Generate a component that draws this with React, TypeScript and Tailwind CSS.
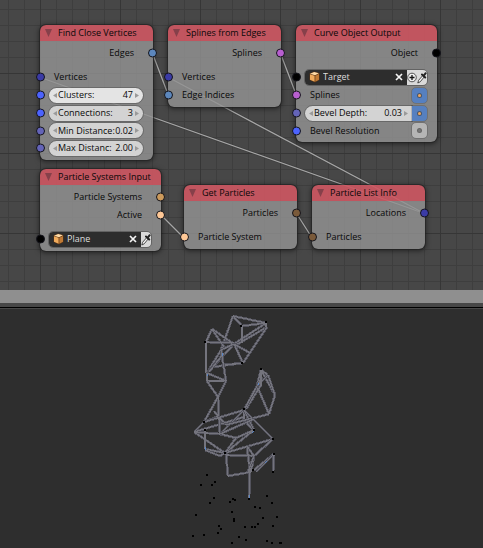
import { useId, type ReactNode } from "react";

const TONES = {
  edges: "bg-[#5c87bd]",
  vector: "bg-[#3b3ba6]",
  integer: "bg-[#4c63ff]",
  float: "bg-[#6464b8]",
  splines: "bg-[#b85fd0]",
  object: "bg-black",
  systems: "bg-[#cc9a5b]",
  system: "bg-[#ffc896]",
  particles: "bg-[#7a5a3a]",
};

type Tone = keyof typeof TONES;

function Socket({ tone, side }: { tone: Tone; side: "left" | "right" }) {
  const place = side === "left" ? "-left-1" : "-right-1";
  return (
    <span
      className={`absolute top-1/2 size-[9px] -translate-y-1/2 rounded-full border border-[#15151c] ${place} ${TONES[tone]}`}
    />
  );
}

function Node({ title, place, children }: { title: string; place: string; children: ReactNode }) {
  return (
    <section
      className={`absolute rounded-md shadow-[0_1px_5px_1px_rgba(0,0,0,0.5)] outline outline-[#222]/60 ${place}`}
    >
      <header className="flex h-4 items-center gap-[6px] rounded-t-md bg-[#ce5662]/90 pl-[5px]">
        <button type="button" aria-label={`Collapse ${title}`} className="flex">
          <svg width="7" height="8" viewBox="0 0 7 8">
            <path d="M0 0h7L3.500 8z" fill="#86404a" />
          </svg>
        </button>
        <h2 className="leading-[18px] whitespace-nowrap">{title}</h2>
      </header>
      <div className="rounded-b-md bg-[#929292]/82 pt-[3px] pb-[3px]">{children}</div>
    </section>
  );
}

function Output({ label, tone }: { label: string; tone: Tone }) {
  return (
    <div className="relative flex h-[18px] items-center justify-end pr-[19px] whitespace-nowrap">
      {label}
      <Socket tone={tone} side="right" />
    </div>
  );
}

function Input({
  tone,
  label,
  children,
  tight = false,
}: {
  tone: Tone;
  label?: string;
  children?: ReactNode;
  tight?: boolean;
}) {
  return (
    <div className={`relative flex items-center pr-[10px] pl-[9px] ${tight ? "h-[17px]" : "h-[18px]"}`}>
      <Socket tone={tone} side="left" />
      {label && <span className="flex-1 pl-[5px] whitespace-nowrap">{label}</span>}
      {children}
    </div>
  );
}

function NumberField({
  label,
  value,
  active = false,
  joined = false,
}: {
  label: string;
  value: string;
  active?: boolean;
  joined?: boolean;
}) {
  const id = useId();
  return (
    <div
      className={`relative flex h-[15px] min-w-0 flex-1 items-center pr-[10px] pl-[9px] outline outline-black/20 ${
        joined ? "rounded-l-lg" : "rounded-lg"
      } ${active ? "bg-[#e4e4e4]" : "bg-[#d3d3d3]"}`}
    >
      <svg className="absolute left-1" width="4" height="5" viewBox="0 0 4 5">
        <path d="M4 0v5L0 2.500z" fill="#9a9a9a" />
      </svg>
      <label htmlFor={id} className="whitespace-nowrap">
        {label}
      </label>
      <input
        id={id}
        defaultValue={value}
        className="w-0 min-w-0 flex-1 bg-transparent text-right outline-none"
      />
      <svg className="absolute right-1" width="4" height="5" viewBox="0 0 4 5">
        <path d="M0 0v5L4 2.500z" fill="#9a9a9a" />
      </svg>
    </div>
  );
}

function UseToggle({ label, on = false, joined = false }: { label: string; on?: boolean; joined?: boolean }) {
  return (
    <label
      className={`relative flex size-[15px] items-center justify-center outline outline-black/15 has-checked:bg-[#5680c0] ${
        joined ? "rounded-r-sm" : "rounded-sm"
      } bg-[#b5b5b5]`}
    >
      <input type="checkbox" aria-label={label} defaultChecked={on} className="peer absolute inset-0 appearance-none" />
      <span className="size-[3px] rounded-full bg-[#777] ring-1 ring-[#444]/70 peer-checked:bg-[#f0a860]" />
    </label>
  );
}

function Cube() {
  return (
    <svg width="11" height="12" viewBox="0 0 11 12" className="shrink-0">
      <path d="M.5 2.500 5 .5l5.500 1.500v7L6 11.500.5 9z" fill="#5b3414" />
      <path d="M1 2.700 5.100 1l4.800 1.300L6 4.200z" fill="#ffdca8" />
      <path d="M1 3.200 5.600 4.700v6.100L1 8.700z" fill="#f0ab5c" />
      <path d="M6.300 4.700 10 2.900v5.900l-3.700 2z" fill="#c07a35" />
    </svg>
  );
}

function Eyedropper() {
  return (
    <svg width="10" height="14" viewBox="0 0 10 14">
      <path d="M.8 13 1.600 10.300 5.800 5.500l1.500 1.300L3.200 11.800z" fill="#f4f4f4" stroke="#222" strokeWidth=".8" />
      <path d="m5 4.500 3.200 3M6.600 5.800 8.700 3.200" stroke="#222" strokeWidth="2" strokeLinecap="round" />
    </svg>
  );
}

function ObjectField({ label, value, create = false }: { label: string; value: string; create?: boolean }) {
  return (
    <div className="flex h-[15px] min-w-0 flex-1 overflow-hidden rounded-sm bg-[#d9d9d9] outline outline-black/25">
      <div className="flex min-w-0 flex-1 items-center gap-[3px] bg-[#2d2d2d] pr-1 pl-1">
        <Cube />
        <input
          aria-label={label}
          defaultValue={value}
          className="w-0 min-w-0 flex-1 bg-transparent text-[#dedede] outline-none"
        />
        <button type="button" aria-label={`Clear ${label}`}>
          <svg width="8" height="8" viewBox="0 0 8 8">
            <path d="m1 1 6 6M7 1 1 7" stroke="#f4f4f4" strokeWidth="1.700" />
          </svg>
        </button>
      </div>
      {create && (
        <button type="button" aria-label="Create object" className="flex items-center">
          <svg width="10" height="11" viewBox="0 0 10 11">
            <circle cx="5" cy="5.500" r="4.300" fill="#eee" stroke="#444" strokeWidth=".9" />
            <path d="M5 3v5M2.500 5.500h5" stroke="#111" strokeWidth="1.300" />
          </svg>
        </button>
      )}
      <button type="button" aria-label="Pick object" className="flex items-center">
        <Eyedropper />
      </button>
    </div>
  );
}

const LINKS = [
  "M152.500 53.500 168.500 95.500",
  "M280.500 53.500 296.500 95.500",
  "M40.500 77.500 424.500 213.500",
  "M168.500 77.500 424.500 213.500",
  "M160.500 214.500 184.500 238.500",
  "M296.500 213.500 312.500 238.500",
];

function Links() {
  return (
    <svg className="absolute top-0 left-0" width="483" height="290" fill="none">
      {LINKS.map((d) => (
        <g key={d}>
          <path d={d} stroke="#333" strokeOpacity=".5" strokeWidth="2.500" />
          <path d={d} stroke="#a6a6a6" strokeWidth="1.300" />
        </g>
      ))}
    </svg>
  );
}

const BEAMS = [
  // upper cluster
  "M233 316 242 326M233 316 266 323M242 326 266 323M242 326 242 343M233 316 220 353M234 344 266 323M236 345 267 327",
  "M266 323V329M212 329 206 342M212 329 234 344M206 342 234 343M206 342V373M212 329 224 347M221 350 207 373",
  "M234 344 207 373M232 346 212 367M234 344 243 363M234 344 250 353M243 363 267 327M223 365 243 363M212 367 243 363",
  "M207 373 226 381M207 373V381M207 381H226M221 350 226 381M221 350 234 344M224 353 209 372",
  // neck
  "M207 381 218 397 226 381M218 397 204 422M218 397 219 418M214 411 226 425M204 422 219 416",
  // middle ring
  "M204 422 244 410M204 422 194 432M194 432 244 417M194 432 220 434M194 432 225 453M205 431V449M205 449 225 453",
  "M205 450 220 456M220 456 225 453M219 418 220 434M220 434 244 410M220 434 236 438M244 410V421M244 421 254 430",
  "M254 430 236 438M254 430 225 453M226 425 269 414M244 410 254 430M244 410 273 439M225 453 273 439",
  "M236 438 225 453M220 434 254 419",
  // right loop
  "M244 410 257 386M246 409 261 385M261 370 257 386M261 370 268 375M261 370 275 395M275 395 269 414M257 386 269 414",
  "M268 375 275 395M257 386 268 375M261 370V386M244 410 262 377",
  // lower cluster
  "M226 454 228 476M226 455 254 456M247 446 254 456M247 446 250 472M254 456 251 472M254 456 273 439M274 454 254 470",
  "M274 454 273 473M228 476 251 472M250 468 249 499M256 472 272 456M254 456 248 472",
];

const HIGHLIGHTS = "M205 447v3M258 385l1-2M222 353v3M252 433l2-2M249 495v3M265 463l2-2M207 374v2";

const JOINTS = [
  [266, 322], [241, 326], [205, 342], [242, 363], [261, 369], [244, 409], [204, 422], [205, 430],
  [254, 430], [273, 439], [225, 453], [274, 454], [273, 472], [249, 499], [253, 470],
];

const PARTICLES = [
  [207, 475], [201, 485], [212, 485], [215, 482], [214, 498], [210, 503], [230, 502], [233, 499],
  [235, 500], [232, 512], [234, 519], [234, 521], [196, 515], [193, 536], [204, 535], [218, 533],
  [219, 526], [221, 529], [245, 527], [252, 527], [255, 527], [258, 524], [263, 518], [260, 508],
  [255, 507], [267, 496], [272, 503], [277, 517], [273, 526], [239, 537], [246, 540], [232, 543],
  [267, 541], [272, 543], [280, 543], [281, 543],
];

function Viewport() {
  return (
    <section className="flex-1 overflow-hidden bg-[#2e2e2e]" aria-label="3D viewport">
      <svg
        className="block w-full"
        viewBox="0 309 483 239"
        fill="none"
        shapeRendering="crispEdges"
        role="img"
        aria-label="Curve mesh"
      >
        {BEAMS.map((d) => (
          <g key={d}>
            <path d={d} stroke="#52525c" strokeWidth="2.700" />
            <path d={d} stroke="#74747d" strokeWidth="1.200" />
          </g>
        ))}
        <path d={HIGHLIGHTS} stroke="#5a86c4" strokeWidth="1" />
        {[...JOINTS, ...PARTICLES].map(([x, y], i) => (
          <rect key={i} x={x - 1} y={y - 1} width="2" height="2" fill="#000" />
        ))}
      </svg>
    </section>
  );
}

export default function App() {
  return (
    <main className="flex min-h-screen flex-col bg-[#2e2e2e] font-['Open_Sans','Noto_Sans',sans-serif] text-[9px] leading-[14px] text-[#080808]">
      <div className="relative h-[290px] overflow-hidden bg-[#474747]">
        <div className="absolute inset-0 bg-[linear-gradient(to_right,#3e3e3e_1px,transparent_1px),linear-gradient(to_bottom,#3e3e3e_1px,transparent_1px)] bg-size-[16px_16px] bg-position-[8px_9px]" />
        <div className="absolute inset-0 bg-[linear-gradient(to_right,#363636_1px,transparent_1px),linear-gradient(to_bottom,#363636_1px,transparent_1px)] bg-size-[80px_80px] bg-position-[40px_73px]" />
        <Links />

        <Node title="Find Close Vertices" place="left-[40px] top-[25px] w-[113px]">
          <Output label="Edges" tone="edges" />
          <div className="pt-[6px]">
            <Input tone="vector" label="Vertices" />
            <Input tone="integer">
              <NumberField label="Clusters:" value="47" active />
            </Input>
            <Input tone="integer">
              <NumberField label="Connections:" value="3" />
            </Input>
            <Input tone="float" tight>
              <NumberField label="Min Distance:" value="0.02" />
            </Input>
            <Input tone="float">
              <NumberField label="Max Distanc:" value="2.00" />
            </Input>
          </div>
        </Node>

        <Node title="Splines from Edges" place="left-[168px] top-[25px] w-[113px]">
          <Output label="Splines" tone="splines" />
          <div className="pt-[6px]">
            <Input tone="vector" label="Vertices" />
            <Input tone="edges" label="Edge Indices" />
          </div>
        </Node>

        <Node title="Curve Object Output" place="left-[296px] top-[25px] w-[141px]">
          <Output label="Object" tone="object" />
          <div className="pt-[6px]">
            <Input tone="object">
              <ObjectField label="Target object" value="Target" create />
            </Input>
            <Input tone="splines" label="Splines">
              <UseToggle label="Use splines" on />
            </Input>
            <Input tone="float">
              <NumberField label="Bevel Depth:" value="0.03" joined />
              <UseToggle label="Use bevel depth" on joined />
            </Input>
            <Input tone="integer" label="Bevel Resolution" tight>
              <UseToggle label="Use bevel resolution" />
            </Input>
          </div>
        </Node>

        <Node title="Particle Systems Input" place="left-[40px] top-[169px] w-[121px]">
          <Output label="Particle Systems" tone="systems" />
          <Output label="Active" tone="system" />
          <div className="pt-[6px]">
            <Input tone="object">
              <ObjectField label="Source object" value="Plane" />
            </Input>
          </div>
        </Node>

        <Node title="Get Particles" place="left-[184px] top-[185px] w-[113px]">
          <Output label="Particles" tone="particles" />
          <div className="pt-[6px]">
            <Input tone="system" label="Particle System" />
          </div>
        </Node>

        <Node title="Particle List Info" place="left-[312px] top-[185px] w-[113px]">
          <Output label="Locations" tone="vector" />
          <div className="pt-[6px]">
            <Input tone="particles" label="Particles" />
          </div>
        </Node>
      </div>
      <div className="h-[13px] bg-[#8f8f8f]" />
      <div className="h-1 bg-[#474747]" />
      <div className="h-px bg-black" />
      <div className="h-px bg-[#474747]" />
      <Viewport />
    </main>
  );
}
